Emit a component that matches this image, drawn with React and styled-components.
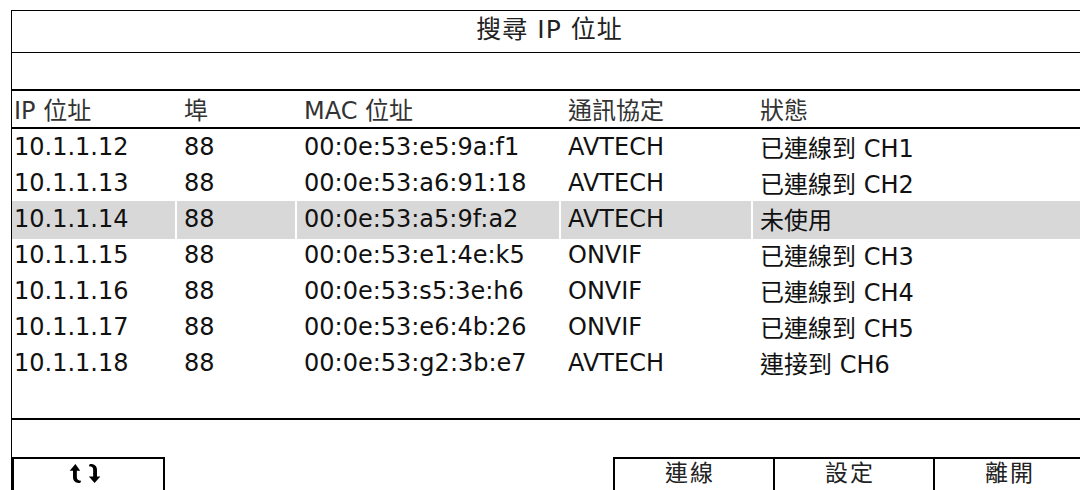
import React from "react";
import styled, { createGlobalStyle } from "styled-components";

const GlobalStyle = createGlobalStyle`
  html, body {
    margin: 0;
    padding: 0;
    background: #ffffff;
    overflow: hidden;
  }
  body {
    font-family: "DejaVu Sans", "Noto Sans CJK TC", sans-serif;
  }
`;

const Screen = styled.div`
  width: 1080px;
  height: 490px;
  padding-top: 10px;
  padding-left: 11px;
  box-sizing: border-box;
  overflow: hidden;
`;

const Panel = styled.div`
  width: 1075px;
  height: 480px;
  border-left: 1px solid #000;
  display: flex;
  flex-direction: column;
`;

const TitleBar = styled.div`
  height: 43px;
  flex-shrink: 0;
  box-sizing: border-box;
  padding-bottom: 4px;
  border-top: 1px solid #000;
  border-bottom: 1px solid #000;
  display: flex;
  align-items: center;
  justify-content: center;
  font-size: 25px;
  line-height: 1;
  letter-spacing: 1px;
  color: #222;
`;

const Spacer = styled.div`
  height: ${({ h }) => h}px;
  flex-shrink: 0;
`;

const Grid = styled.div`
  display: grid;
  grid-template-columns: 163px 118px 262px 190px 1fr;
  column-gap: 2px;
  flex-shrink: 0;
`;

const HeaderRow = styled(Grid)`
  height: 36px;
  border-top: 2px solid #000;
  border-bottom: 2px solid #000;
`;

const Row = styled(Grid)`
  height: 36px;
`;

const Cell = styled.div`
  display: flex;
  align-items: center;
  padding-left: ${({ pad }) => pad}px;
  padding-bottom: ${({ head }) => (head ? 5 : 3)}px;
  font-size: 24px;
  white-space: nowrap;
  background: ${({ active }) => (active ? "#d8d8d8" : "transparent")};
  color: ${({ head }) => (head ? "#333" : "#111")};
`;

const Filler = styled.div`
  flex: 1;
  border-bottom: 2px solid #000;
`;

const ButtonBar = styled.div`
  height: 70px;
  flex-shrink: 0;
  box-sizing: border-box;
  padding-top: 37px;
  display: flex;
  align-items: flex-start;
`;

const Button = styled.div`
  width: ${({ w }) => w}px;
  height: 40px;
  flex-shrink: 0;
  box-sizing: border-box;
  border: 2px solid #000;
  border-bottom: none;
  margin-left: ${({ ml }) => ml}px;
  display: flex;
  justify-content: center;
  padding-top: 3px;
  padding-right: 8px;
  font-size: 23px;
  letter-spacing: 2px;
  line-height: 1;
  color: #222;
`;

const SwapIcon = () => (
  <svg width="36" height="23" viewBox="0 0 36 24">
    <path
      d="M8 2 L2 9 H5.5 V16 C5.5 20 8 22 13 22 L14 19.5 C11 19.5 9.5 18.5 9.5 16 V9 H13 Z"
      fill="#000"
    />
    <path
      d="M28 22 L34 15 H30.5 V8 C30.5 4 28 2 23 2 L22 4.5 C25 4.5 26.5 5.5 26.5 8 V15 H22 Z"
      fill="#000"
    />
  </svg>
);

const headers = ["IP 位址", "埠", "MAC 位址", "通訊協定", "狀態"];

const rows = [
  ["10.1.1.12", "88", "00:0e:53:e5:9a:f1", "AVTECH", "已連線到 CH1"],
  ["10.1.1.13", "88", "00:0e:53:a6:91:18", "AVTECH", "已連線到 CH2"],
  ["10.1.1.14", "88", "00:0e:53:a5:9f:a2", "AVTECH", "未使用"],
  ["10.1.1.15", "88", "00:0e:53:e1:4e:k5", "ONVIF", "已連線到 CH3"],
  ["10.1.1.16", "88", "00:0e:53:s5:3e:h6", "ONVIF", "已連線到 CH4"],
  ["10.1.1.17", "88", "00:0e:53:e6:4b:26", "ONVIF", "已連線到 CH5"],
  ["10.1.1.18", "88", "00:0e:53:g2:3b:e7", "AVTECH", "連接到 CH6"],
];

const pads = [2, 7, 7, 7, 7];

export default function App() {
  return (
    <>
      <GlobalStyle />
      <Screen>
        <Panel>
          <TitleBar>搜尋 IP 位址</TitleBar>
          <Spacer h={36} />
          <HeaderRow>
            {headers.map((h, i) => (
              <Cell key={h} head pad={pads[i]}>
                {h}
              </Cell>
            ))}
          </HeaderRow>
          {rows.map((r, ri) => (
            <Row key={r[0]}>
              {r.map((c, ci) => (
                <Cell key={ci} pad={pads[ci]} active={ri === 2}>
                  {c}
                </Cell>
              ))}
            </Row>
          ))}
          <Filler />
          <ButtonBar>
            <Button w={153} ml={0}>
              <SwapIcon />
            </Button>
            <Button w={162} ml={448}>連線</Button>
            <Button w={162} ml={-2}>設定</Button>
            <Button w={162} ml={-2}>離開</Button>
          </ButtonBar>
        </Panel>
      </Screen>
    </>
  );
}
